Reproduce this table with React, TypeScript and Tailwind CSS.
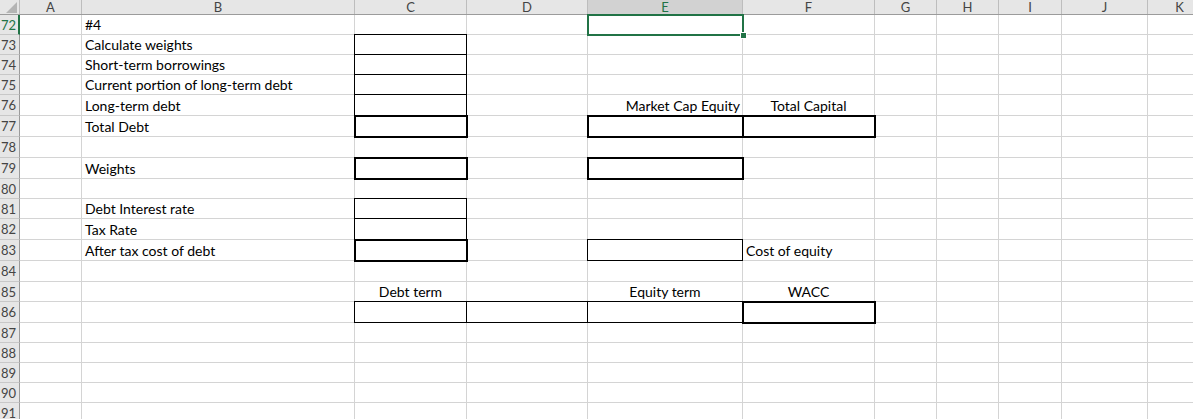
import React from "react";

type Border = "thin" | "thick" | "select";
type Cell = { text?: string; align?: "left" | "right" | "center"; border?: Border };

const cols = [
  { key: "A", w: "w-[62px]" },
  { key: "B", w: "w-[273px]" },
  { key: "C", w: "w-[112px]" },
  { key: "D", w: "w-[121px]" },
  { key: "E", w: "w-[155px]" },
  { key: "F", w: "w-[132px]" },
  { key: "G", w: "w-[62px]" },
  { key: "H", w: "w-[62px]" },
  { key: "I", w: "w-[63px]" },
  { key: "J", w: "w-[86px]" },
  { key: "K", w: "w-[64px]" },
];

const rows = [
  { n: 72, h: "h-[20px]" },
  { n: 73, h: "h-[20px]" },
  { n: 74, h: "h-[20px]" },
  { n: 75, h: "h-[20px]" },
  { n: 76, h: "h-[21px]" },
  { n: 77, h: "h-[21px]" },
  { n: 78, h: "h-[21px]" },
  { n: 79, h: "h-[21px]" },
  { n: 80, h: "h-[20px]" },
  { n: 81, h: "h-[20px]" },
  { n: 82, h: "h-[21px]" },
  { n: 83, h: "h-[21px]" },
  { n: 84, h: "h-[21px]" },
  { n: 85, h: "h-[20px]" },
  { n: 86, h: "h-[21px]" },
  { n: 87, h: "h-[20px]" },
  { n: 88, h: "h-[20px]" },
  { n: 89, h: "h-[20px]" },
  { n: 90, h: "h-[20px]" },
  { n: 91, h: "h-[20px]" },
];

const cells: Record<string, Cell> = {
  E72: { border: "select" },
  B72: { text: "#4" },
  B73: { text: "Calculate weights" },
  B74: { text: "Short-term borrowings" },
  B75: { text: "Current portion of long-term debt" },
  B76: { text: "Long-term debt" },
  B77: { text: "Total Debt" },
  B79: { text: "Weights" },
  B81: { text: "Debt Interest rate" },
  B82: { text: "Tax Rate" },
  B83: { text: "After tax cost of debt" },
  C73: { border: "thin" },
  C74: { border: "thin" },
  C75: { border: "thin" },
  C76: { border: "thin" },
  C77: { border: "thick" },
  C79: { border: "thick" },
  C81: { border: "thin" },
  C82: { border: "thin" },
  C83: { border: "thick" },
  E76: { text: "Market Cap Equity", align: "right" },
  F76: { text: "Total Capital", align: "center" },
  E77: { border: "thick" },
  F77: { border: "thick" },
  E79: { border: "thick" },
  E83: { border: "thin" },
  F83: { text: "Cost of equity" },
  C85: { text: "Debt term", align: "center" },
  E85: { text: "Equity term", align: "center" },
  F85: { text: "WACC", align: "center" },
  C86: { border: "thin" },
  D86: { border: "thin" },
  E86: { border: "thin" },
  F86: { border: "thick" },
};

function CellBorder({ kind }: { kind: Border }) {
  if (kind === "thin")
    return <div className="absolute -left-px -top-px -right-px -bottom-px border border-black z-10" />;
  if (kind === "thick")
    return <div className="absolute -left-px -top-px -right-[2px] -bottom-[2px] border-2 border-black z-10" />;
  return (
    <div className="absolute -left-px -top-px -right-[2px] -bottom-[2px] border-2 border-[#217346] z-20">
      <div className="absolute -right-[5px] -bottom-[5px] w-[7px] h-[7px] bg-[#217346] border border-white" />
    </div>
  );
}

export default function App() {
  return (
    <div
      className="w-[1193px] h-[419px] overflow-hidden bg-white text-black"
      style={{ fontFamily: "Lato, 'Liberation Sans', sans-serif" }}
    >
      {/* column headers */}
      <div className="flex h-[15px] border-b border-[#9b9b9b] bg-[#e6e6e6] text-[13px] leading-[14px] text-[#444]">
        <div className="w-[20px] shrink-0 border-r border-[#bdbdbd] relative">
          <svg className="absolute right-[2px] bottom-[1px]" width="11" height="11" viewBox="0 0 11 11">
            <polygon points="11,0 11,11 0,11" fill="#b4b4b4" />
          </svg>
        </div>
        {cols.map((c) => (
          <div
            key={c.key}
            className={`${c.w} shrink-0 border-r border-[#bdbdbd] text-center ${
              c.key === "E" ? "bg-[#d2d2d2] text-[#217346]" : ""
            }`}
          >
            {c.key}
          </div>
        ))}
      </div>

      {rows.map((r) => (
        <div key={r.n} className={`flex ${r.h}`}>
          <div
            className={`w-[20px] shrink-0 bg-[#e6e6e6] border-b border-[#c8c8c8] text-[13px] leading-[18px] pl-[1px] flex items-center ${
              r.n === 72
                ? "border-r-2 border-r-[#217346] text-[#217346]"
                : "border-r border-r-[#9b9b9b] text-[#444]"
            }`}
          >
            {r.n}
          </div>
          {cols.map((c) => {
            const cell = cells[c.key + r.n];
            const align =
              cell?.align === "right"
                ? "justify-end pr-[2px]"
                : cell?.align === "center"
                ? "justify-center"
                : "justify-start pl-[3px]";
            return (
              <div
                key={c.key}
                className={`${c.w} shrink-0 relative border-r border-b border-[#d4d4d4] flex items-end pb-[1px] ${align}`}
              >
                {cell?.text && (
                  <span className="text-[14px] leading-[17px] whitespace-nowrap relative z-30">{cell.text}</span>
                )}
                {cell?.border && <CellBorder kind={cell.border} />}
              </div>
            );
          })}
        </div>
      ))}
    </div>
  );
}
